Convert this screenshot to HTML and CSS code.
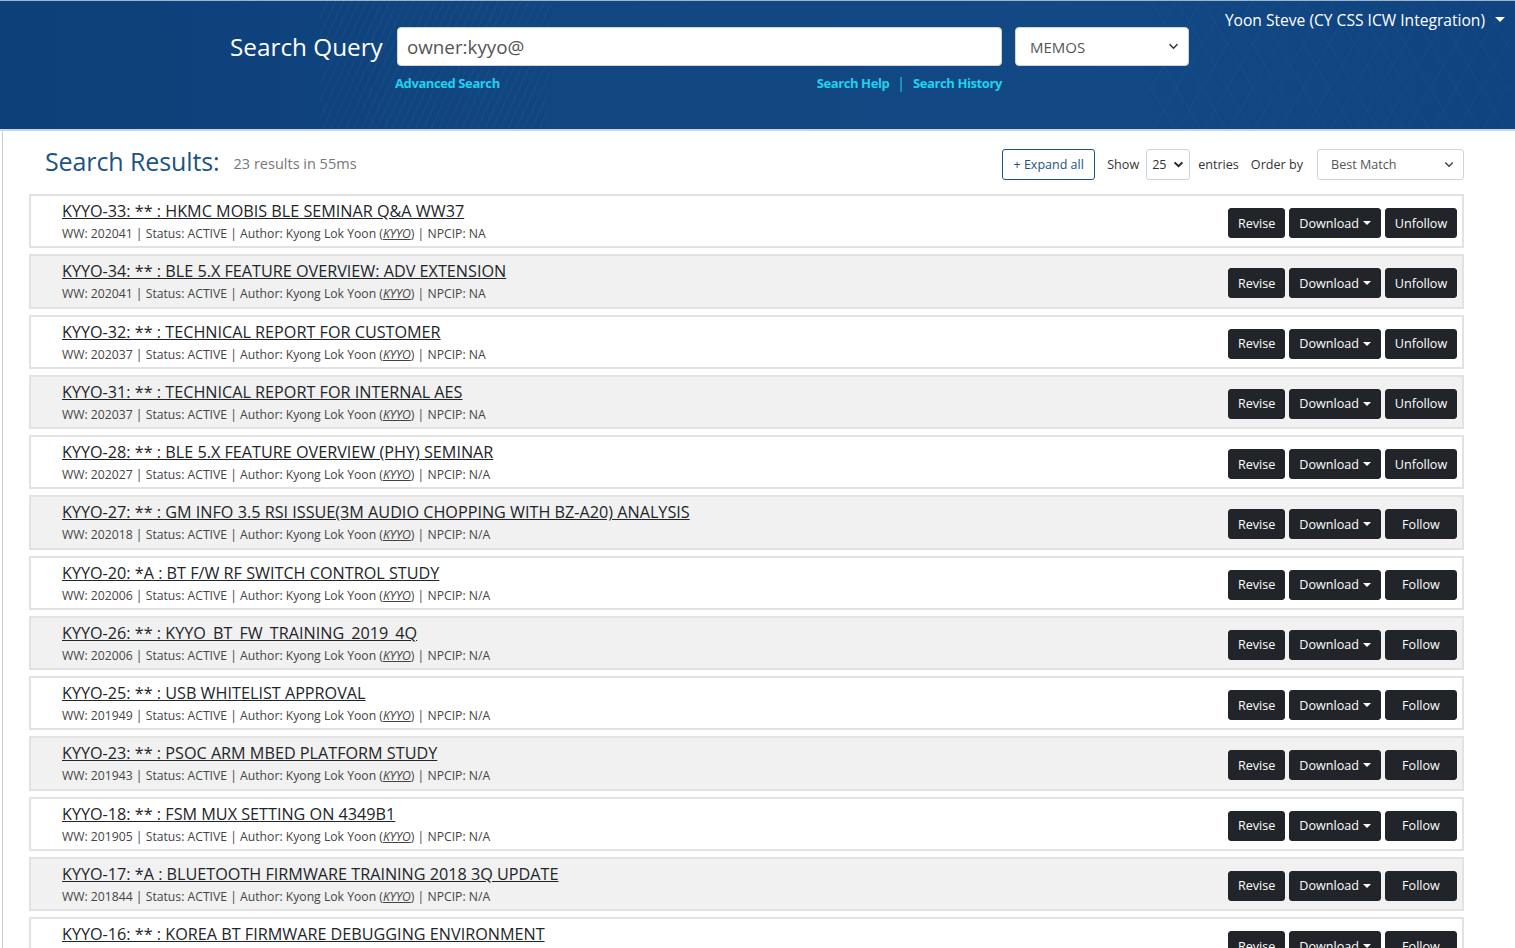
FILE: index.html
```html
<!DOCTYPE html>
<html lang="en">
<head>
<meta charset="utf-8">
<title>Search Results</title>
<link rel="stylesheet" href="styles.css">
</head>
<body>
<header class="top">
  <div class="search-block">
    <div class="search-row">
      <label class="search-label">Search Query</label>
      <div class="query-input">owner:kyyo@</div>
      <div class="type-select">MEMOS<svg class="chev" viewBox="0 0 12 8" width="11" height="7"><path d="M1.5 1.5 6 6l4.5-4.5" fill="none" stroke="#333" stroke-width="1.8"/></svg></div>
    </div>
    <div class="links-row">
      <a class="hlink">Advanced Search</a>
      <div class="links-right"><a class="hlink">Search Help</a><span class="sep">|</span><a class="hlink">Search History</a></div>
    </div>
  </div>
  <div class="user">Yoon Steve (CY CSS ICW Integration)<span class="caret-w"></span></div>
</header>

<main class="main">
  <div class="results-head">
    <h2 class="rtitle">Search Results:</h2>
    <span class="rcount">23 results in 55ms</span>
    <div class="controls">
      <button class="expand">+ Expand all</button>
      <span class="ctl-text">Show</span>
      <div class="sel sel-small">25<svg class="chev" viewBox="0 0 12 8" width="11" height="7"><path d="M1.5 1.5 6 6l4.5-4.5" fill="none" stroke="#222" stroke-width="2.2"/></svg></div>
      <span class="ctl-text">entries</span>
      <span class="ctl-text">Order by</span>
      <div class="sel sel-order">Best Match<svg class="chev" viewBox="0 0 12 8" width="10" height="7"><path d="M1.5 1.5 6 6l4.5-4.5" fill="none" stroke="#444" stroke-width="1.8"/></svg></div>
    </div>
  </div>

  <div class="list">
    <div class="item">
      <div class="info"><a class="title">KYYO-33: ** : HKMC MOBIS BLE SEMINAR Q&amp;A WW37</a><div class="meta">WW: 202041 | Status: ACTIVE | Author: Kyong Lok Yoon (<a class="uid">KYYO</a>) | NPCIP: NA</div></div>
      <div class="actions"><button class="btn">Revise</button><button class="btn">Download<span class="caret"></span></button><button class="btn wide">Unfollow</button></div>
    </div>
    <div class="item alt">
      <div class="info"><a class="title">KYYO-34: ** : BLE 5.X FEATURE OVERVIEW: ADV EXTENSION</a><div class="meta">WW: 202041 | Status: ACTIVE | Author: Kyong Lok Yoon (<a class="uid">KYYO</a>) | NPCIP: NA</div></div>
      <div class="actions"><button class="btn">Revise</button><button class="btn">Download<span class="caret"></span></button><button class="btn wide">Unfollow</button></div>
    </div>
    <div class="item">
      <div class="info"><a class="title">KYYO-32: ** : TECHNICAL REPORT FOR CUSTOMER</a><div class="meta">WW: 202037 | Status: ACTIVE | Author: Kyong Lok Yoon (<a class="uid">KYYO</a>) | NPCIP: NA</div></div>
      <div class="actions"><button class="btn">Revise</button><button class="btn">Download<span class="caret"></span></button><button class="btn wide">Unfollow</button></div>
    </div>
    <div class="item alt">
      <div class="info"><a class="title">KYYO-31: ** : TECHNICAL REPORT FOR INTERNAL AES</a><div class="meta">WW: 202037 | Status: ACTIVE | Author: Kyong Lok Yoon (<a class="uid">KYYO</a>) | NPCIP: NA</div></div>
      <div class="actions"><button class="btn">Revise</button><button class="btn">Download<span class="caret"></span></button><button class="btn wide">Unfollow</button></div>
    </div>
    <div class="item">
      <div class="info"><a class="title">KYYO-28: ** : BLE 5.X FEATURE OVERVIEW (PHY) SEMINAR</a><div class="meta">WW: 202027 | Status: ACTIVE | Author: Kyong Lok Yoon (<a class="uid">KYYO</a>) | NPCIP: N/A</div></div>
      <div class="actions"><button class="btn">Revise</button><button class="btn">Download<span class="caret"></span></button><button class="btn wide">Unfollow</button></div>
    </div>
    <div class="item alt">
      <div class="info"><a class="title">KYYO-27: ** : GM INFO 3.5 RSI ISSUE(3M AUDIO CHOPPING WITH BZ-A20) ANALYSIS</a><div class="meta">WW: 202018 | Status: ACTIVE | Author: Kyong Lok Yoon (<a class="uid">KYYO</a>) | NPCIP: N/A</div></div>
      <div class="actions"><button class="btn">Revise</button><button class="btn">Download<span class="caret"></span></button><button class="btn wide">Follow</button></div>
    </div>
    <div class="item">
      <div class="info"><a class="title">KYYO-20: *A : BT F/W RF SWITCH CONTROL STUDY</a><div class="meta">WW: 202006 | Status: ACTIVE | Author: Kyong Lok Yoon (<a class="uid">KYYO</a>) | NPCIP: N/A</div></div>
      <div class="actions"><button class="btn">Revise</button><button class="btn">Download<span class="caret"></span></button><button class="btn wide">Follow</button></div>
    </div>
    <div class="item alt">
      <div class="info"><a class="title">KYYO-26: ** : KYYO_BT_FW_TRAINING_2019_4Q</a><div class="meta">WW: 202006 | Status: ACTIVE | Author: Kyong Lok Yoon (<a class="uid">KYYO</a>) | NPCIP: N/A</div></div>
      <div class="actions"><button class="btn">Revise</button><button class="btn">Download<span class="caret"></span></button><button class="btn wide">Follow</button></div>
    </div>
    <div class="item">
      <div class="info"><a class="title">KYYO-25: ** : USB WHITELIST APPROVAL</a><div class="meta">WW: 201949 | Status: ACTIVE | Author: Kyong Lok Yoon (<a class="uid">KYYO</a>) | NPCIP: N/A</div></div>
      <div class="actions"><button class="btn">Revise</button><button class="btn">Download<span class="caret"></span></button><button class="btn wide">Follow</button></div>
    </div>
    <div class="item alt">
      <div class="info"><a class="title">KYYO-23: ** : PSOC ARM MBED PLATFORM STUDY</a><div class="meta">WW: 201943 | Status: ACTIVE | Author: Kyong Lok Yoon (<a class="uid">KYYO</a>) | NPCIP: N/A</div></div>
      <div class="actions"><button class="btn">Revise</button><button class="btn">Download<span class="caret"></span></button><button class="btn wide">Follow</button></div>
    </div>
    <div class="item">
      <div class="info"><a class="title">KYYO-18: ** : FSM MUX SETTING ON 4349B1</a><div class="meta">WW: 201905 | Status: ACTIVE | Author: Kyong Lok Yoon (<a class="uid">KYYO</a>) | NPCIP: N/A</div></div>
      <div class="actions"><button class="btn">Revise</button><button class="btn">Download<span class="caret"></span></button><button class="btn wide">Follow</button></div>
    </div>
    <div class="item alt">
      <div class="info"><a class="title">KYYO-17: *A : BLUETOOTH FIRMWARE TRAINING 2018 3Q UPDATE</a><div class="meta">WW: 201844 | Status: ACTIVE | Author: Kyong Lok Yoon (<a class="uid">KYYO</a>) | NPCIP: N/A</div></div>
      <div class="actions"><button class="btn">Revise</button><button class="btn">Download<span class="caret"></span></button><button class="btn wide">Follow</button></div>
    </div>
    <div class="item">
      <div class="info"><a class="title">KYYO-16: ** : KOREA BT FIRMWARE DEBUGGING ENVIRONMENT</a><div class="meta">WW: 201835 | Status: ACTIVE | Author: Kyong Lok Yoon (<a class="uid">KYYO</a>) | NPCIP: N/A</div></div>
      <div class="actions"><button class="btn">Revise</button><button class="btn">Download<span class="caret"></span></button><button class="btn wide">Follow</button></div>
    </div>
  </div>
</main>
</body>
</html>
```

FILE: styles.css
```css
* { box-sizing: border-box; }
html, body { margin: 0; padding: 0; }
body {
  font-family: "Open Sans", "Noto Sans", "Liberation Sans", sans-serif;
  color: #212529;
  background: #fff;
  overflow: hidden;
  height: 948px;
}

/* ---------- header ---------- */
.top {
  height: 131px;
  display: flex;
  align-items: flex-start;
  padding: 0 10px 0 230px;
  border-top: 1px solid #9fb4cc;
  border-bottom: 2px solid #c9d6e4;
  background-color: #10457f;
  background-image:
    repeating-linear-gradient(115deg, rgba(255,255,255,0.035) 0 1px, transparent 1px 7px),
    repeating-linear-gradient(60deg, rgba(255,255,255,0.025) 0 1px, transparent 1px 22px),
    repeating-linear-gradient(120deg, rgba(255,255,255,0.025) 0 1px, transparent 1px 22px),
    linear-gradient(90deg, #0d3f78 0%, #114681 35%, #124883 70%, #0f4480 100%);
  background-size: 230px 130px, 360px 130px, 360px 130px, 100% 100%;
  background-position: 320px 0, 1150px 0, 1150px 0, 0 0;
  background-repeat: no-repeat, no-repeat, no-repeat, no-repeat;
}
.search-block { display: flex; flex-direction: column; }
.search-row { display: flex; align-items: center; margin-top: 26px; }
.search-label {
  color: #fff;
  font-size: 24.3px;
  width: 167px;
}
.query-input {
  width: 605px;
  height: 39px;
  background: #fff;
  border: 1px solid #ced4da;
  border-radius: 4px;
  padding: 0 9px;
  display: flex;
  align-items: center;
  font-size: 18.8px;
  color: #555;
}
.type-select {
  width: 174px;
  height: 39px;
  margin-left: 13px;
  background: #fff;
  border: 1px solid #ced4da;
  border-radius: 4px;
  padding: 0 9px 0 14px;
  display: flex;
  align-items: center;
  justify-content: space-between;
  font-size: 15px;
  color: #555;
}
.links-row {
  display: flex;
  justify-content: space-between;
  align-items: center;
  margin-top: 7px;
  padding-left: 165px;
  padding-right: 187px;
}
.hlink {
  color: #1fd2f2;
  font-weight: 700;
  font-size: 13px;
  letter-spacing: -0.4px;
}
.links-right { display: flex; align-items: center; }
.sep { color: #1fd2f2; margin: 0 8px; font-size: 14px; }
.user {
  margin-left: auto;
  margin-top: 8px;
  color: #fff;
  font-size: 15.6px;
  display: flex;
  align-items: center;
}
.caret-w {
  display: inline-block;
  margin-left: 10px;
  margin-bottom: 2px;
  border-top: 5px solid #fff;
  border-left: 5px solid transparent;
  border-right: 5px solid transparent;
}

/* ---------- main ---------- */
.main {
  margin-left: 2px;
  border-left: 1px solid #c9cdd2;
  padding: 17px 51px 0 26px;
  min-height: 817px;
}
.results-head {
  display: flex;
  align-items: center;
  height: 31px;
  margin-bottom: 15px;
}
.rtitle {
  margin: -5px 0 0 16px;
  font-weight: 400;
  font-size: 25px;
  color: #1a5487;
  letter-spacing: -0.1px;
}
.rcount {
  margin-left: 14px;
  font-size: 14.5px;
  color: #777;
}
.controls {
  margin-left: auto;
  margin-top: 2px;
  display: flex;
  align-items: center;
  font-size: 12.6px;
  color: #333;
}
.expand {
  font-family: inherit;
  height: 31px;
  width: 93px;
  font-size: 12.5px;
  color: #1a5487;
  background: #fff;
  border: 1px solid #1a5487;
  border-radius: 3px;
  padding: 0;
  margin-right: 12px;
}
.ctl-text { margin-right: 7px; }
.sel {
  height: 31px;
  border: 1px solid #ced4da;
  border-radius: 3px;
  display: flex;
  align-items: center;
  justify-content: space-between;
  background: #fff;
  color: #333;
}
.sel-small { width: 44px; padding: 0 5px 0 5px; margin-right: 8px; }
.ctl-text + .ctl-text { margin-left: 5px; }
.sel-order { width: 147px; padding: 0 9px 0 13px; margin-left: 7px; color: #555; }

/* ---------- list ---------- */
.list { display: flex; flex-direction: column; }
.item {
  height: 54.25px;
  margin-bottom: 6px;
  border: 2px solid #e2e2e2;
  background: #fff;
  display: flex;
  align-items: flex-start;
  padding: 0 5px 0 31px;
}
.item.alt { background: #f1f1f1; }
.info { padding-top: 5px; }
.title {
  display: block;
  color: #212529;
  text-decoration: underline;
  font-size: 16.2px;
  line-height: 21px;
}
.meta {
  font-size: 12.2px;
  color: #444;
  line-height: 16px;
  margin-top: 4px;
}
.uid { font-style: italic; text-decoration: underline; }
.actions {
  margin-left: auto;
  margin-top: 12px;
  display: flex;
  gap: 4px;
}
.btn {
  font-family: inherit;
  height: 30px;
  background: #212529;
  color: #fff;
  border: 1px solid #212529;
  border-radius: 3px;
  font-size: 12.6px;
  padding: 0 9px;
  display: flex;
  align-items: center;
  justify-content: center;
}
.btn.wide { width: 72px; }
.caret {
  display: inline-block;
  margin-left: 4px;
  border-top: 4px solid #fff;
  border-left: 4px solid transparent;
  border-right: 4px solid transparent;
}
```
